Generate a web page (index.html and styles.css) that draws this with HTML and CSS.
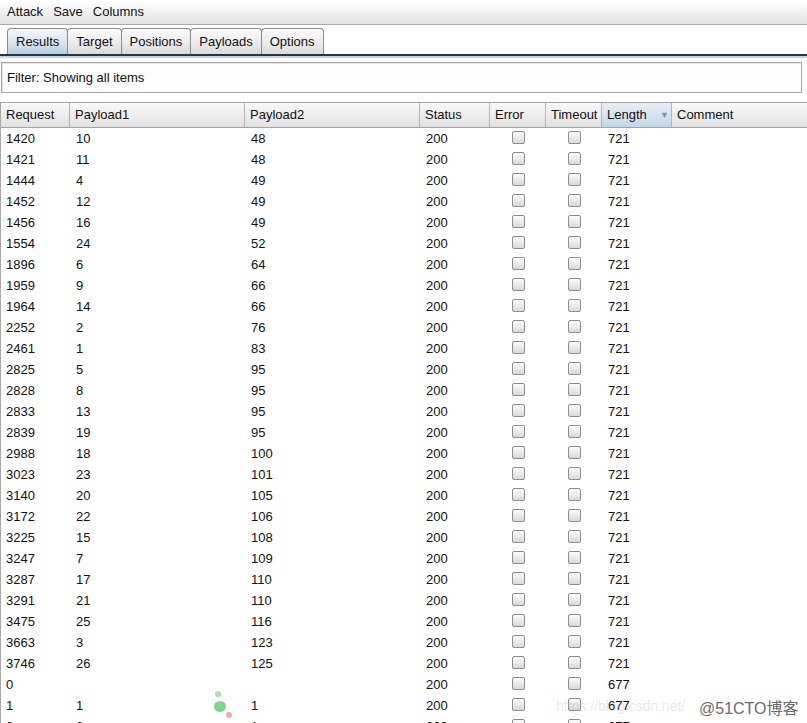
FILE: index.html
```html
<!DOCTYPE html>
<html>
<head>
<meta charset="utf-8">
<link rel="stylesheet" href="styles.css">
</head>
<body>
<div class="menubar">
  <span class="menu-item">Attack</span>
  <span class="menu-item">Save</span>
  <span class="menu-item">Columns</span>
</div>
<div class="tabbar">
  <div class="tab selected">Results</div>
  <div class="tab">Target</div>
  <div class="tab">Positions</div>
  <div class="tab">Payloads</div>
  <div class="tab">Options</div>
</div>
<div class="tabline"></div>
<div class="filter">Filter: Showing all items</div>
<div class="table">
  <div class="row head">
    <div class="hc">Request</div>
    <div class="hc">Payload1</div>
    <div class="hc">Payload2</div>
    <div class="hc">Status</div>
    <div class="hc">Error</div>
    <div class="hc">Timeout</div>
    <div class="hc sorted">Length<span class="arrow">▼</span></div>
    <div class="hc last">Comment</div>
  </div>
  <div id="body"></div>
  <span class="dot d1"></span>
  <span class="dot d2"></span>
  <span class="dot d3"></span>
  <span class="wm-faint">https://blog.csdn.net/</span>
  <span class="wm">@51CTO博客</span>
</div>
<script src="script.js"></script>
</body>
</html>
```

FILE: script.js
```js
var data = [
  ["1420","10","48","200","721"],
  ["1421","11","48","200","721"],
  ["1444","4","49","200","721"],
  ["1452","12","49","200","721"],
  ["1456","16","49","200","721"],
  ["1554","24","52","200","721"],
  ["1896","6","64","200","721"],
  ["1959","9","66","200","721"],
  ["1964","14","66","200","721"],
  ["2252","2","76","200","721"],
  ["2461","1","83","200","721"],
  ["2825","5","95","200","721"],
  ["2828","8","95","200","721"],
  ["2833","13","95","200","721"],
  ["2839","19","95","200","721"],
  ["2988","18","100","200","721"],
  ["3023","23","101","200","721"],
  ["3140","20","105","200","721"],
  ["3172","22","106","200","721"],
  ["3225","15","108","200","721"],
  ["3247","7","109","200","721"],
  ["3287","17","110","200","721"],
  ["3291","21","110","200","721"],
  ["3475","25","116","200","721"],
  ["3663","3","123","200","721"],
  ["3746","26","125","200","721"],
  ["0","","","200","677"],
  ["1","1","1","200","677"],
  ["2","2","1","200","677"]
];
var body = document.getElementById("body");
var html = "";
data.forEach(function (r) {
  html += '<div class="row">' +
    '<div class="c">' + r[0] + '</div>' +
    '<div class="c">' + r[1] + '</div>' +
    '<div class="c">' + r[2] + '</div>' +
    '<div class="c">' + r[3] + '</div>' +
    '<div class="c cbc"><span class="cb"></span></div>' +
    '<div class="c cbc"><span class="cb"></span></div>' +
    '<div class="c">' + r[4] + '</div>' +
    '<div class="c"></div>' +
    '</div>';
});
body.innerHTML = html;
```

FILE: styles.css
```css
html, body {
  margin: 0;
  padding: 0;
  background: #ffffff;
  overflow: hidden;
}
body {
  font-family: "Liberation Sans", Arial, sans-serif;
  font-size: 13px;
  color: #111111;
  width: 807px;
  height: 723px;
}
.menubar {
  height: 24px;
  border-bottom: 1px solid #a9a9a9;
  background: linear-gradient(#ffffff, #f3f3f3 45%, #e2e2e2);
  display: flex;
  align-items: center;
  gap: 10px;
  padding-left: 7px;
  line-height: 20px;
}
.tabbar {
  display: flex;
  padding-left: 7px;
  margin-top: 3px;
  height: 26px;
}
.tab {
  box-sizing: border-box;
  height: 26px;
  border: 1px solid #8c8c8c;
  border-bottom: none;
  border-radius: 4px 4px 0 0;
  background: linear-gradient(#fbfbfb, #ececec 55%, #dadada);
  padding: 0 8px;
  line-height: 25px;
  margin-right: -1px;
}
.tab.selected {
  background: linear-gradient(#f4f7fa, #d9e5ef 55%, #b9cfe2);
}
.tabline {
  height: 2px;
  background: #26364a;
  border-bottom: 2px solid #c3d5e5;
}
.filter {
  box-sizing: border-box;
  margin: 4px 5px 0 1px;
  height: 31px;
  border: 1px solid #a6a6a6;
  box-shadow: inset 1px 1px 0 #e4e4e4;
  background: #fdfdfd;
  padding-left: 5px;
  line-height: 29px;
}
.table {
  position: relative;
  margin-top: 9px;
  border-left: 1px solid #a8a8a8;
}
.row {
  display: grid;
  grid-template-columns: 69px 175px 175px 70px 56px 56px 70px 1fr;
  height: 21px;
  line-height: 21px;
}
.row.head {
  height: 24px;
  line-height: 24px;
  border-top: 1px solid #a3a3a3;
  border-bottom: 1px solid #a3a3a3;
  background: linear-gradient(#f9f9f9, #eeeeee 50%, #e2e2e2);
}
.hc {
  box-sizing: border-box;
  border-right: 1px solid #b4b4b4;
  padding-left: 5px;
  position: relative;
  white-space: nowrap;
  overflow: hidden;
}
.hc.last {
  border-right: none;
}
.hc.sorted {
  background: linear-gradient(#e6eff6, #d3e3ef 55%, #c3d7e7);
}
.arrow {
  position: absolute;
  left: 58px;
  top: 0;
  font-size: 9px;
  color: #7f95aa;
}
.c {
  box-sizing: border-box;
  padding-left: 6px;
  white-space: nowrap;
}
.row .c:first-child {
  padding-left: 5px;
}
.cbc {
  display: flex;
  justify-content: center;
  padding-left: 0 !important;
  padding-top: 3px;
}
.cb {
  display: block;
  width: 11px;
  height: 11px;
  border: 1px solid #8e8e8e;
  border-radius: 2px;
  background: linear-gradient(#fbfbfb, #e8e8e8 60%, #d9d9d9);
  margin-left: 1px;
}
.dot {
  position: absolute;
  border-radius: 50%;
}
.d1 {
  left: 214px;
  top: 589px;
  width: 6px;
  height: 6px;
  background: #a6e3a6;
}
.d2 {
  left: 213px;
  top: 599px;
  width: 12px;
  height: 11px;
  background: #7fd88a;
}
.d3 {
  left: 225px;
  top: 610px;
  width: 6px;
  height: 6px;
  background: #f2a7ae;
}
.wm-faint {
  position: absolute;
  left: 555px;
  top: 596px;
  font-size: 14px;
  color: rgba(160, 160, 160, 0.25);
  white-space: nowrap;
}
.wm {
  position: absolute;
  left: 698px;
  top: 593px;
  font-size: 16px;
  color: #6a6a6a;
  white-space: nowrap;
  font-family: "Liberation Sans", "Noto Sans CJK SC", sans-serif;
  text-shadow: 0 0 2px #ffffff;
  background: rgba(255,255,255,0.6);
}
```
